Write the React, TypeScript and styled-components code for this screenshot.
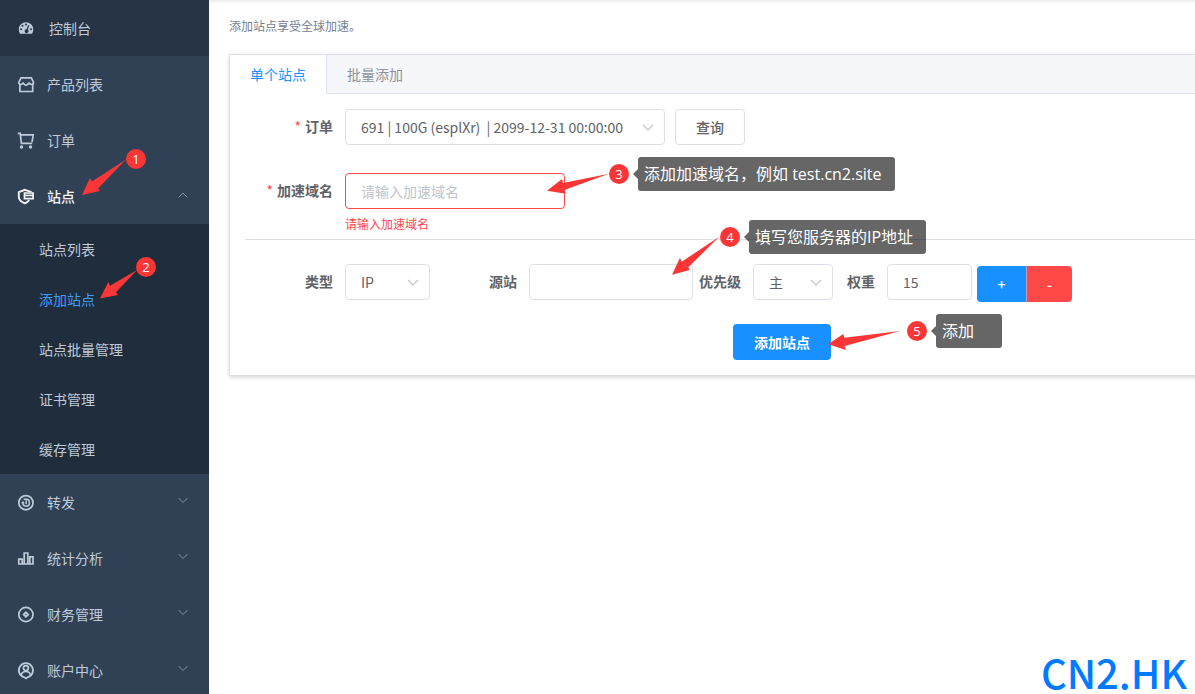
import React from "react";
import styled, { createGlobalStyle } from "styled-components";

const Global = createGlobalStyle`
  *, *::before, *::after { box-sizing: border-box; }
  body {
    margin: 0;
    background: #fff;
    color: #606266;
    font: 14px/20px "Noto Sans CJK SC", "Noto Sans", sans-serif;
  }
  button, input, select { font: inherit; color: inherit; margin: 0; }
`;

const Shell = styled.div`
  position: relative;
  display: flex;
  height: 100vh;
  overflow: hidden;
`;

/* ---------- sidebar ---------- */

const Sidebar = styled.nav`
  flex: none;
  width: 209px;
  overflow: hidden;
  background: #304156;
`;

const MenuItem = styled.a<{ $hover?: boolean; $open?: boolean }>`
  display: flex;
  align-items: center;
  gap: ${(p) => (p.$hover ? 14 : 12)}px;
  height: 56px;
  padding: 0 20px 0 17px;
  color: ${(p) => (p.$open ? "#f4f4f5" : "#bfcbd9")};
  background: ${(p) => (p.$hover ? "#263445" : "transparent")};
  font-weight: ${(p) => (p.$open ? 500 : 400)};
  text-decoration: none;
`;

const MenuText = styled.span`
  flex: 1;
`;

const SubMenu = styled.div`
  background: #1f2d3d;
`;

const SubItem = styled.a<{ $active?: boolean }>`
  display: flex;
  align-items: center;
  height: 50px;
  padding-left: 39px;
  color: ${(p) => (p.$active ? "#409eff" : "#bfcbd9")};
  text-decoration: none;
`;

const Glyph = styled.svg`
  flex: none;
  display: block;
  margin-top: 2px;
  fill: none;
  stroke: currentColor;
  stroke-width: 1.7;
`;

const MenuChevron = styled.svg`
  flex: none;
  width: 12px;
  height: 12px;
  margin-bottom: 2px;
  fill: none;
  stroke: #87919f;
`;

type IconName = "dash" | "shop" | "cart" | "site" | "forward" | "stats" | "money" | "user";

const shapes: Record<IconName, React.ReactNode> = {
  dash: (
    <path
      fill="currentColor"
      stroke="none"
      fillRule="evenodd"
      d="M9 2.200a7.200 7.200 0 0 1 7.200 7.200c0 1.700-.4 3-1.200 4.400H3A8 8 0 0 1 1.800 9.400 7.200 7.200 0 0 1 9 2.200zM9 3.400a1 1 0 1 0 0 2 1 1 0 0 0 0-2zM5.500 4.800a1 1 0 1 0 0 2 1 1 0 0 0 0-2zM4 8.200a1 1 0 1 0 0 2 1 1 0 0 0 0-2zM14 8.200a1 1 0 1 0 0 2 1 1 0 0 0 0-2zM12.300 4.900L10.900 5.400 9.600 9.200a1.900 1.900 0 1 0 1.300.5z"
    />
  ),
  shop: (
    <>
      <path d="M4 1.800h10.400l2.100 4.700c0 1.300-.6 2-1.700 2-1.200 0-2-.7-2.700-1.400-.7.800-1.500 2-3 2S6.900 7.900 6.200 7.100C5.500 7.800 4.700 8.500 3.500 8.500c-1.100 0-1.700-.7-1.700-2z" />
      <path d="M2.900 8.300v7.200h12.800V8.300" />
    </>
  ),
  cart: (
    <>
      <path d="M.8 1.400h2.400l1.200 10h10.800M3.500 2.900h12.700l-1.200 7.300" />
      <circle cx="4.500" cy="15" r="1.700" fill="currentColor" stroke="none" />
      <circle cx="13.500" cy="15" r="1.700" fill="currentColor" stroke="none" />
    </>
  ),
  site: (
    <>
      <path d="M13.800 4.200V3.900L7.800 1.800 1.800 4.100v4.700c0 3.300 2.700 5.200 6 6.500 1.900-.7 3.300-1.700 4.400-3.100" strokeWidth="1.900" />
      <path d="M7.500 5h8.600v5.700H7.500z" />
      <path d="M7.500 7.400h8.600" />
    </>
  ),
  forward: (
    <>
      <circle cx="8.900" cy="8.700" r="7.100" />
      <path d="M6.600 5.300h2.800c2.100 0 3 1.500 3 3.400s-1.100 3.500-3.200 3.500-3.300-1.300-3.300-3.100M9.200 6.300v4" strokeWidth="1.500" />
      <path d="M3.900 9.300l2-2.200 2 2.200z" fill="currentColor" stroke="none" />
    </>
  ),
  stats: (
    <path d="M1.800 9.200h3.400v4.800H1.800zM7.200 3h3.600v11H7.200zM12.800 6.800h3.200V14h-3.200zM1 14h15.800" />
  ),
  money: (
    <>
      <circle cx="8.900" cy="8.500" r="7.100" />
      <path d="M8.900 6.300l2.200 2.200-2.200 2.200-2.200-2.200z" strokeWidth="1.900" />
    </>
  ),
  user: (
    <>
      <path d="M8.900 16.400l-2-1.300a7.100 7.100 0 1 1 4 0z" />
      <circle cx="8.900" cy="6.100" r="2.500" />
      <path d="M4.200 13c.6-2.300 2.500-3.500 4.700-3.500s4.100 1.200 4.700 3.500" />
    </>
  ),
};

const Icon = ({ name }: { name: IconName }) => (
  <Glyph width="18" height="18" viewBox="0 0 18 18" aria-hidden="true">
    {shapes[name]}
  </Glyph>
);

const Chevron = ({ up }: { up?: boolean }) => (
  <MenuChevron viewBox="0 0 12 12" aria-hidden="true">
    <path d={up ? "M1.500 8.500L6 4l4.500 4.500" : "M1.500 3L6 7.500 10.500 3"} />
  </MenuChevron>
);

/* ---------- main area ---------- */

const Main = styled.main`
  flex: 1;
  min-width: 0;
  overflow: hidden;
  padding: 16px 0 0 20px;
  box-shadow: inset 0 3px 3px -1px rgba(0, 21, 41, 0.08);
`;

const Intro = styled.p`
  margin: 0 0 18px;
  font-size: 12px;
  color: #76808f;
`;

/* The form is wider than the window and runs off its right edge. */
const Card = styled.section`
  margin-right: -140px;
  border: 1px solid #dcdfe6;
  background: #fff;
  box-shadow: 0 2px 4px rgba(0, 0, 0, 0.12), 0 0 6px rgba(0, 0, 0, 0.04);
`;

const Tabs = styled.div`
  display: flex;
  height: 39px;
  background: #f5f7fa;
  border-bottom: 1px solid #dfe4ed;
`;

const Tab = styled.button<{ $active?: boolean }>`
  height: 39px;
  padding: 0 20px 2px;
  border: 0;
  border-right: 1px solid ${(p) => (p.$active ? "#dcdfe6" : "transparent")};
  background: ${(p) => (p.$active ? "#fff" : "transparent")};
  color: ${(p) => (p.$active ? "#1890ff" : "#909399")};
`;

const Form = styled.form`
  padding: 15px;
`;

const Row = styled.div<{ $gap?: number }>`
  display: flex;
  align-items: flex-start;
  margin-bottom: ${(p) => p.$gap ?? 0}px;
`;

const Label = styled.label<{ $width: number; $required?: boolean }>`
  width: ${(p) => p.$width}px;
  padding-right: 12px;
  line-height: 34px;
  font-weight: 700;
  text-align: right;
  white-space: nowrap;
  ${(p) => p.$required && `&::before { content: "*"; margin-right: 4px; color: #ff4949; font-weight: 400; }`}
`;

const Input = styled.input<{ $width: number; $error?: boolean }>`
  display: block;
  width: ${(p) => p.$width}px;
  height: 36px;
  padding: 0 15px;
  border: 1px solid ${(p) => (p.$error ? "#ff4949" : "#dcdfe6")};
  border-radius: 4px;
  background: #fff;
  outline: 0;
  &::placeholder { color: #c0c4cc; opacity: 1; }
`;

const SelectBox = styled.div<{ $width: number }>`
  position: relative;
  width: ${(p) => p.$width}px;
`;

const SelectField = styled.select`
  appearance: none;
  display: block;
  width: 100%;
  height: 36px;
  padding: 0 30px 0 15px;
  border: 1px solid #dcdfe6;
  border-radius: 4px;
  background: #fff;
`;

const SelectArrow = styled.svg`
  position: absolute;
  top: 12px;
  right: 11px;
  width: 12px;
  height: 12px;
  fill: none;
  stroke: #c0c4cc;
  stroke-width: 1.2;
  pointer-events: none;
`;

const Select = ({ id, width, value }: { id: string; width: number; value: string }) => (
  <SelectBox $width={width}>
    <SelectField id={id}>
      <option>{value}</option>
    </SelectField>
    <SelectArrow viewBox="0 0 12 12" aria-hidden="true">
      <path d="M1 4l5 5 5-5" />
    </SelectArrow>
  </SelectBox>
);

const QueryButton = styled.button`
  height: 36px;
  margin-left: 10px;
  padding: 0 20px;
  border: 1px solid #dcdfe6;
  border-radius: 4px;
  background: #fff;
  font-weight: 500;
`;

const ErrorText = styled.p`
  height: 30px;
  margin: 0;
  padding-top: 5px;
  font-size: 12px;
  color: #ff4949;
`;

const Divider = styled.hr`
  height: 1px;
  margin: 0 0 24px;
  border: 0;
  background: #dcdfe6;
`;

const ButtonGroup = styled.div`
  display: flex;
  padding: 2px 0 0 5px;
`;

const StepButton = styled.button<{ $danger?: boolean }>`
  width: ${(p) => (p.$danger ? 45 : 50)}px;
  height: 36px;
  padding: 0;
  border: 0;
  border-right: ${(p) => (p.$danger ? 0 : "1px solid #b99cc4")};
  border-radius: ${(p) => (p.$danger ? "0 4px 4px 0" : "4px 0 0 4px")};
  background: ${(p) => (p.$danger ? "#ff4949" : "#1890ff")};
  color: #fff;
  font-weight: 500;
`;

const SubmitRow = styled.div`
  display: flex;
  justify-content: center;
`;

const SubmitButton = styled.button`
  height: 36px;
  padding: 0 21px;
  border: 0;
  border-radius: 4px;
  background: #1890ff;
  color: #fff;
  font-weight: 700;
`;

/* ---------- walkthrough notes, laid over the page ---------- */

const Badge = styled.span`
  position: absolute;
  width: 20px;
  height: 20px;
  border-radius: 50%;
  background: #fc3636;
  color: #fff;
  font: 13px/20px "Open Sans", "Noto Sans", sans-serif;
  text-align: center;
`;

const Arrows = styled.svg`
  position: absolute;
  top: 0;
  left: 0;
  fill: #fc3636;
  pointer-events: none;
`;

const Tip = styled.div`
  position: absolute;
  height: 34px;
  padding: 0 12px 0 6px;
  border-radius: 3px;
  background: rgba(0, 0, 0, 0.6);
  color: #fff;
  font: 16px/34px "Open Sans", "Noto Sans CJK SC", sans-serif;
  white-space: nowrap;
  &::before {
    content: "";
    position: absolute;
    top: 12px;
    left: -5px;
    border: solid transparent;
    border-width: 5px 5px 5px 0;
    border-right-color: rgba(0, 0, 0, 0.6);
  }
`;

const Watermark = styled.div`
  position: absolute;
  right: 8px;
  bottom: 1px;
  color: #007bff;
  font-size: 40px;
  line-height: 42px;
  font-weight: 500;
`;

const badges = [
  { x: 126, y: 149 },
  { x: 136, y: 257 },
  { x: 609, y: 164 },
  { x: 720, y: 227 },
  { x: 907, y: 321 },
];

const arrows = [
  "82,195 90,178 92,181.5 126,159.500 98,188.500 100,191",
  "100,298.500 108.300,282 110,285.700 137,270 116,292.300 118,295",
  "547,190.700 562,179 563,183 609,173.700 564.300,190 565.700,193.700",
  "672,274.700 680,257.700 681.700,261.700 719.300,236.700 688.300,267.300 689.700,270",
  "828,344.300 843.300,334 844.300,337.700 900,331 844.700,346 846,350",
];

const tips = [
  { x: 638, y: 157, w: 257, text: "添加加速域名，例如 test.cn2.site" },
  { x: 749, y: 220, w: 177, text: "填写您服务器的IP地址" },
  { x: 936, y: 314, w: 66, text: "添加" },
];

const topItems: { icon: IconName; text: string; hover?: boolean }[] = [
  { icon: "dash", text: "控制台", hover: true },
  { icon: "shop", text: "产品列表" },
  { icon: "cart", text: "订单" },
];

const bottomItems: { icon: IconName; text: string }[] = [
  { icon: "forward", text: "转发" },
  { icon: "stats", text: "统计分析" },
  { icon: "money", text: "财务管理" },
  { icon: "user", text: "账户中心" },
];

const subItems = ["站点列表", "添加站点", "站点批量管理", "证书管理", "缓存管理"];

export default function App() {
  return (
    <Shell>
      <Global />
      <Sidebar>
        {topItems.map((m) => (
          <MenuItem key={m.text} href="#" $hover={m.hover}>
            <Icon name={m.icon} />
            <MenuText>{m.text}</MenuText>
          </MenuItem>
        ))}
        <MenuItem href="#" $open>
          <Icon name="site" />
          <MenuText>站点</MenuText>
          <Chevron up />
        </MenuItem>
        <SubMenu>
          {subItems.map((t) => (
            <SubItem key={t} href="#" $active={t === "添加站点"}>
              {t}
            </SubItem>
          ))}
        </SubMenu>
        {bottomItems.map((m) => (
          <MenuItem key={m.text} href="#">
            <Icon name={m.icon} />
            <MenuText>{m.text}</MenuText>
            <Chevron />
          </MenuItem>
        ))}
      </Sidebar>

      <Main>
        <Intro>添加站点享受全球加速。</Intro>
        <Card>
          <Tabs role="tablist">
            <Tab type="button" role="tab" aria-selected="true" $active>
              单个站点
            </Tab>
            <Tab type="button" role="tab" aria-selected="false">
              批量添加
            </Tab>
          </Tabs>
          <Form>
            <Row $gap={28}>
              <Label htmlFor="order" $width={100} $required>
                订单
              </Label>
              <Select id="order" width={320} value={"691 | 100G (esplXr)\u00a0 | 2099-12-31 00:00:00"} />
              <QueryButton type="button">查询</QueryButton>
            </Row>
            <Row>
              <Label htmlFor="domain" $width={100} $required>
                加速域名
              </Label>
              <div>
                <Input id="domain" $width={220} $error placeholder="请输入加速域名" />
                <ErrorText>请输入加速域名</ErrorText>
              </div>
            </Row>
            <Divider />
            <Row $gap={22}>
              <Label htmlFor="type" $width={100}>
                类型
              </Label>
              <Select id="type" width={85} value="IP" />
              <Label htmlFor="origin" $width={99}>
                源站
              </Label>
              <Input id="origin" $width={164} />
              <Label htmlFor="level" $width={60}>
                优先级
              </Label>
              <Select id="level" width={80} value="主" />
              <Label htmlFor="weight" $width={54}>
                权重
              </Label>
              <Input id="weight" $width={85} defaultValue="15" />
              <ButtonGroup>
                <StepButton type="button">+</StepButton>
                <StepButton type="button" $danger>
                  -
                </StepButton>
              </ButtonGroup>
            </Row>
            <SubmitRow>
              <SubmitButton type="button">添加站点</SubmitButton>
            </SubmitRow>
          </Form>
        </Card>
      </Main>

      <Arrows width="920" height="360" aria-hidden="true">
        {arrows.map((points) => (
          <polygon key={points} points={points} />
        ))}
      </Arrows>
      {badges.map((b, i) => (
        <Badge key={i} style={{ left: b.x, top: b.y }}>
          {i + 1}
        </Badge>
      ))}
      {tips.map((t) => (
        <Tip key={t.text} style={{ left: t.x, top: t.y, width: t.w }}>
          {t.text}
        </Tip>
      ))}
      <Watermark>CN2.HK</Watermark>
    </Shell>
  );
}
